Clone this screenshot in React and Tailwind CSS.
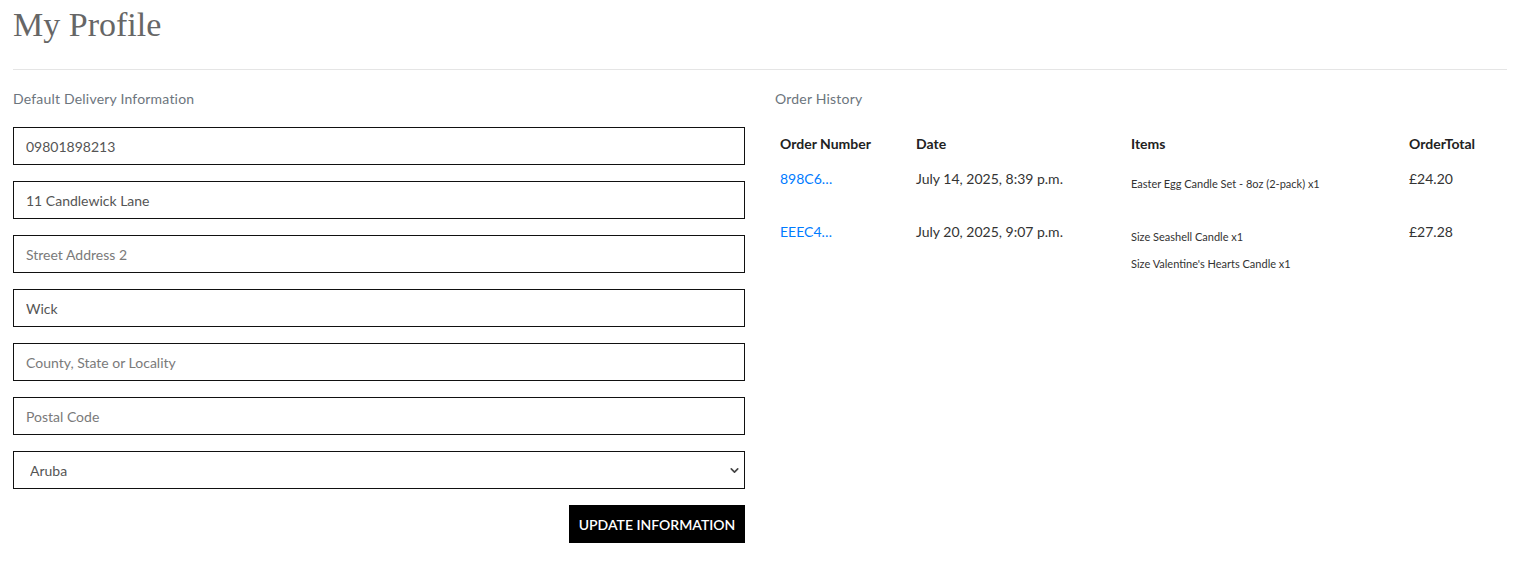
import { ChevronDown } from "lucide-react";

const orders = [
  {
    id: "898C6…",
    date: "July 14, 2025, 8:39 p.m.",
    items: ["Easter Egg Candle Set - 8oz (2-pack) x1"],
    total: "£24.20",
  },
  {
    id: "EEEC4…",
    date: "July 20, 2025, 9:07 p.m.",
    items: ["Size Seashell Candle x1", "Size Valentine's Hearts Candle x1"],
    total: "£27.28",
  },
];

const fields = [
  { value: "09801898213", placeholder: "Phone Number" },
  { value: "11 Candlewick Lane", placeholder: "Street Address 1" },
  { value: "", placeholder: "Street Address 2" },
  { value: "Wick", placeholder: "Town or City" },
  { value: "", placeholder: "County, State or Locality" },
  { value: "", placeholder: "Postal Code" },
];

const App = () => {
  return (
    <div
      className="min-h-screen bg-white px-[13px] text-[#333]"
      style={{ fontFamily: "Lato, 'Open Sans', sans-serif" }}
    >
      <h1
        className="pt-[3px] text-[34px] leading-[44px] text-[#666]"
        style={{ fontFamily: "'Liberation Serif', serif", fontWeight: 300 }}
      >
        My Profile
      </h1>
      <hr className="mt-[22px] border-t border-[#e5e5e5]" />

      <div className="mt-[19px] grid grid-cols-2 gap-[30px]">
        <div>
          <p className="text-[14px] leading-[20px] tracking-[0.2px] text-[#6c757d]">
            Default Delivery Information
          </p>
          <form className="mt-[18px] flex flex-col gap-[16px]">
            {fields.map((f, i) => (
              <input
                key={i}
                defaultValue={f.value}
                placeholder={f.placeholder}
                className="h-[38px] w-full border border-[#111] px-[12px] text-[14px] text-[#555] placeholder:text-[#7a7a7a] outline-none"
              />
            ))}
            <div className="relative">
              <select
                defaultValue="Aruba"
                className="h-[38px] w-full appearance-none border border-[#111] bg-white pl-[16px] text-[14px] text-[#555] outline-none"
              >
                <option>Aruba</option>
              </select>
              <ChevronDown
                size={13}
                strokeWidth={3}
                className="pointer-events-none absolute right-[4px] top-[13px] text-[#444]"
              />
            </div>
            <div className="flex justify-end">
              <button
                type="button"
                className="h-[38px] w-[176px] bg-black text-[14px] font-semibold uppercase text-white"
              >
                Update Information
              </button>
            </div>
          </form>
        </div>

        <div>
          <p className="text-[14px] leading-[20px] tracking-[0.2px] text-[#6c757d]">Order History</p>
          <table className="mt-[19px] w-full table-fixed text-left text-[14px]">
            <colgroup>
              <col className="w-[136px]" />
              <col className="w-[215px]" />
              <col className="w-[278px]" />
              <col />
            </colgroup>
            <thead>
              <tr className="text-[#222]">
                <th className="px-[5px] py-[5px] font-bold leading-[21px]">Order Number</th>
                <th className="px-[5px] py-[5px] font-bold leading-[21px]">Date</th>
                <th className="px-[5px] py-[5px] font-bold leading-[21px]">Items</th>
                <th className="px-[5px] py-[5px] font-bold leading-[21px]">OrderTotal</th>
              </tr>
            </thead>
            <tbody>
              {orders.map((o) => (
                <tr key={o.id} className="align-top">
                  <td className="px-[5px] pt-[9px] leading-[21px]">
                    <a href="#" className="text-[#007bff]">
                      {o.id}
                    </a>
                  </td>
                  <td className="px-[5px] pt-[9px] leading-[21px] text-[#333]">{o.date}</td>
                  <td className="px-[5px] pt-[9px]">
                    <div className="flex flex-col gap-[10px] pb-[20px] pt-[7px]">
                      {o.items.map((it) => (
                        <p key={it} className="text-[11px] leading-[17px] text-[#333]">
                          {it}
                        </p>
                      ))}
                    </div>
                  </td>
                  <td className="px-[5px] pt-[9px] leading-[21px] text-[#333]">{o.total}</td>
                </tr>
              ))}
            </tbody>
          </table>
        </div>
      </div>
    </div>
  );
};

export default App;
